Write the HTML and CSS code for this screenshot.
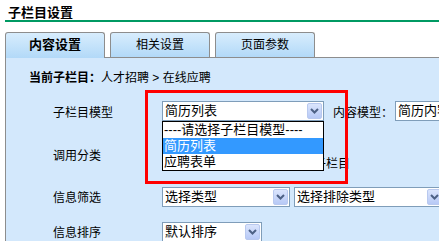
FILE: index.html
```html
<!DOCTYPE html>
<html lang="zh-CN">
<head>
  <meta charset="utf-8">
  <title>子栏目设置</title>
  <link rel="stylesheet" href="styles.css">
</head>
<body>
  <div class="page">
    <h1 class="title">子栏目设置</h1>

    <div class="tabs">
      <div class="tab active">内容设置</div>
      <div class="tab">相关设置</div>
      <div class="tab">页面参数</div>
    </div>

    <div class="panel">
      <div class="current"><b>当前子栏目：</b>人才招聘 &gt; 在线应聘</div>

      <div class="form">
        <div class="label">子栏目模型</div>
        <div class="field">
          <div class="select-wrap">
            <div class="select w-model">
              <span>简历列表</span>
              <span class="arrow"><svg width="9" height="6" viewBox="0 0 9 6"><path d="M1 1 L4.5 4.5 L8 1" fill="none" stroke="#4d6185" stroke-width="2"/></svg></span>
            </div>
            <ul class="droplist">
              <li>----请选择子栏目模型----</li>
              <li class="on">简历列表</li>
              <li>应聘表单</li>
            </ul>
          </div>
          <span class="sub-label">内容模型：</span>
          <div class="select w-content">
            <span>简历内容模型</span>
            <span class="arrow"><svg width="9" height="6" viewBox="0 0 9 6"><path d="M1 1 L4.5 4.5 L8 1" fill="none" stroke="#4d6185" stroke-width="2"/></svg></span>
          </div>
        </div>

        <div class="label">调用分类</div>
        <div class="field stack">
          <div class="select w-model">
            <span></span>
            <span class="arrow"><svg width="9" height="6" viewBox="0 0 9 6"><path d="M1 1 L4.5 4.5 L8 1" fill="none" stroke="#4d6185" stroke-width="2"/></svg></span>
          </div>
          <label class="check"><span class="box"></span>是否作为调用分类的下级子栏目</label>
        </div>

        <div class="label">信息筛选</div>
        <div class="field">
          <div class="select w-type">
            <span>选择类型</span>
            <span class="arrow"><svg width="9" height="6" viewBox="0 0 9 6"><path d="M1 1 L4.5 4.5 L8 1" fill="none" stroke="#4d6185" stroke-width="2"/></svg></span>
          </div>
          <div class="select w-exclude">
            <span>选择排除类型</span>
            <span class="arrow"><svg width="9" height="6" viewBox="0 0 9 6"><path d="M1 1 L4.5 4.5 L8 1" fill="none" stroke="#4d6185" stroke-width="2"/></svg></span>
          </div>
        </div>

        <div class="label">信息排序</div>
        <div class="field">
          <div class="select w-sort">
            <span>默认排序</span>
            <span class="arrow"><svg width="9" height="6" viewBox="0 0 9 6"><path d="M1 1 L4.5 4.5 L8 1" fill="none" stroke="#4d6185" stroke-width="2"/></svg></span>
          </div>
        </div>
      </div>
    </div>
  </div>

  <div class="mark"></div>
</body>
</html>
```

FILE: styles.css
```css
html, body {
  overflow: hidden;
}

body {
  margin: 0;
  padding: 0;
  background-color: #ffffff;
  color: #000000;
  font-family: "Liberation Sans", "Noto Sans CJK SC", sans-serif;
  font-size: 12px;
}

.page {
  width: 600px;
  padding-left: 5px;
}

.title {
  margin: 0;
  padding: 5px 0 0 3px;
  height: 15px;
  line-height: 15px;
  font-size: 13px;
  font-weight: bold;
  border-bottom: 2px solid #009a63;
}

.tabs {
  display: flex;
  gap: 5px;
  margin-top: 10px;
  height: 25px;
}

.tab {
  box-sizing: border-box;
  width: 100px;
  height: 25px;
  border: 1px solid #8d8d8d;
  border-bottom: 0;
  border-radius: 3px 3px 0 0;
  background: linear-gradient(#d8edfd, #b2d9f8);
  text-align: center;
  line-height: 24px;
  font-size: 12px;
}

.tab.active {
  position: relative;
  z-index: 1;
  height: 26px;
  margin-bottom: -1px;
  font-size: 13px;
  font-weight: bold;
}

.panel {
  border-top: 1px solid #8d8d8d;
  border-left: 1px solid #8d8d8d;
  background-color: #d3e8fc;
  min-height: 200px;
}

.current {
  margin-top: 10px;
  padding-left: 23px;
  height: 20px;
  line-height: 20px;
}

.form {
  display: grid;
  grid-template-columns: 109px auto;
  grid-template-rows: 36px 50px 35px 35px;
  margin-top: 5px;
  padding-left: 47px;
}

.label {
  display: flex;
  align-items: center;
}

.field {
  display: flex;
  align-items: center;
}

.field.stack {
  flex-direction: column;
  align-items: flex-start;
  justify-content: center;
}

.select-wrap {
  position: relative;
}

.select {
  box-sizing: border-box;
  display: flex;
  align-items: center;
  justify-content: space-between;
  height: 20px;
  padding: 0 1px 0 2px;
  border: 1px solid #7f9db9;
  background-color: #ffffff;
  font-size: 13px;
  line-height: 18px;
  white-space: nowrap;
  overflow: hidden;
}

.arrow {
  display: flex;
  align-items: center;
  justify-content: center;
  flex: none;
  width: 15px;
  height: 16px;
  border: 1px solid #b9c9ef;
  border-radius: 2px;
  box-sizing: border-box;
  background: linear-gradient(#dbe5fd, #b7c9f6);
}

.w-model { width: 162px; }
.w-content { width: 130px; }
.w-type { width: 128px; }
.w-exclude { width: 150px; margin-left: 4px; }
.w-sort { width: 100px; }

.sub-label {
  margin-left: 9px;
  margin-right: 2px;
}

.droplist {
  position: absolute;
  top: 20px;
  left: 0;
  z-index: 2;
  box-sizing: border-box;
  width: 162px;
  margin: 0;
  padding: 0;
  list-style: none;
  border: 1px solid #000000;
  background-color: #ffffff;
  font-size: 13px;
}

.droplist li {
  height: 16px;
  line-height: 16px;
  padding-left: 1px;
  white-space: nowrap;
}

.droplist li.on {
  background-color: #3399ff;
  color: #ffffff;
}

.check {
  display: flex;
  align-items: center;
  height: 16px;
  line-height: 16px;
  padding-left: 4px;
  white-space: nowrap;
}

.check .box {
  box-sizing: border-box;
  width: 13px;
  height: 13px;
  margin-right: 3px;
  border: 1px solid #1c5180;
  background-color: #ffffff;
}

.mark {
  position: absolute;
  left: 145px;
  top: 90px;
  box-sizing: border-box;
  width: 203px;
  height: 94px;
  border: 3px solid #ff0000;
}
```
